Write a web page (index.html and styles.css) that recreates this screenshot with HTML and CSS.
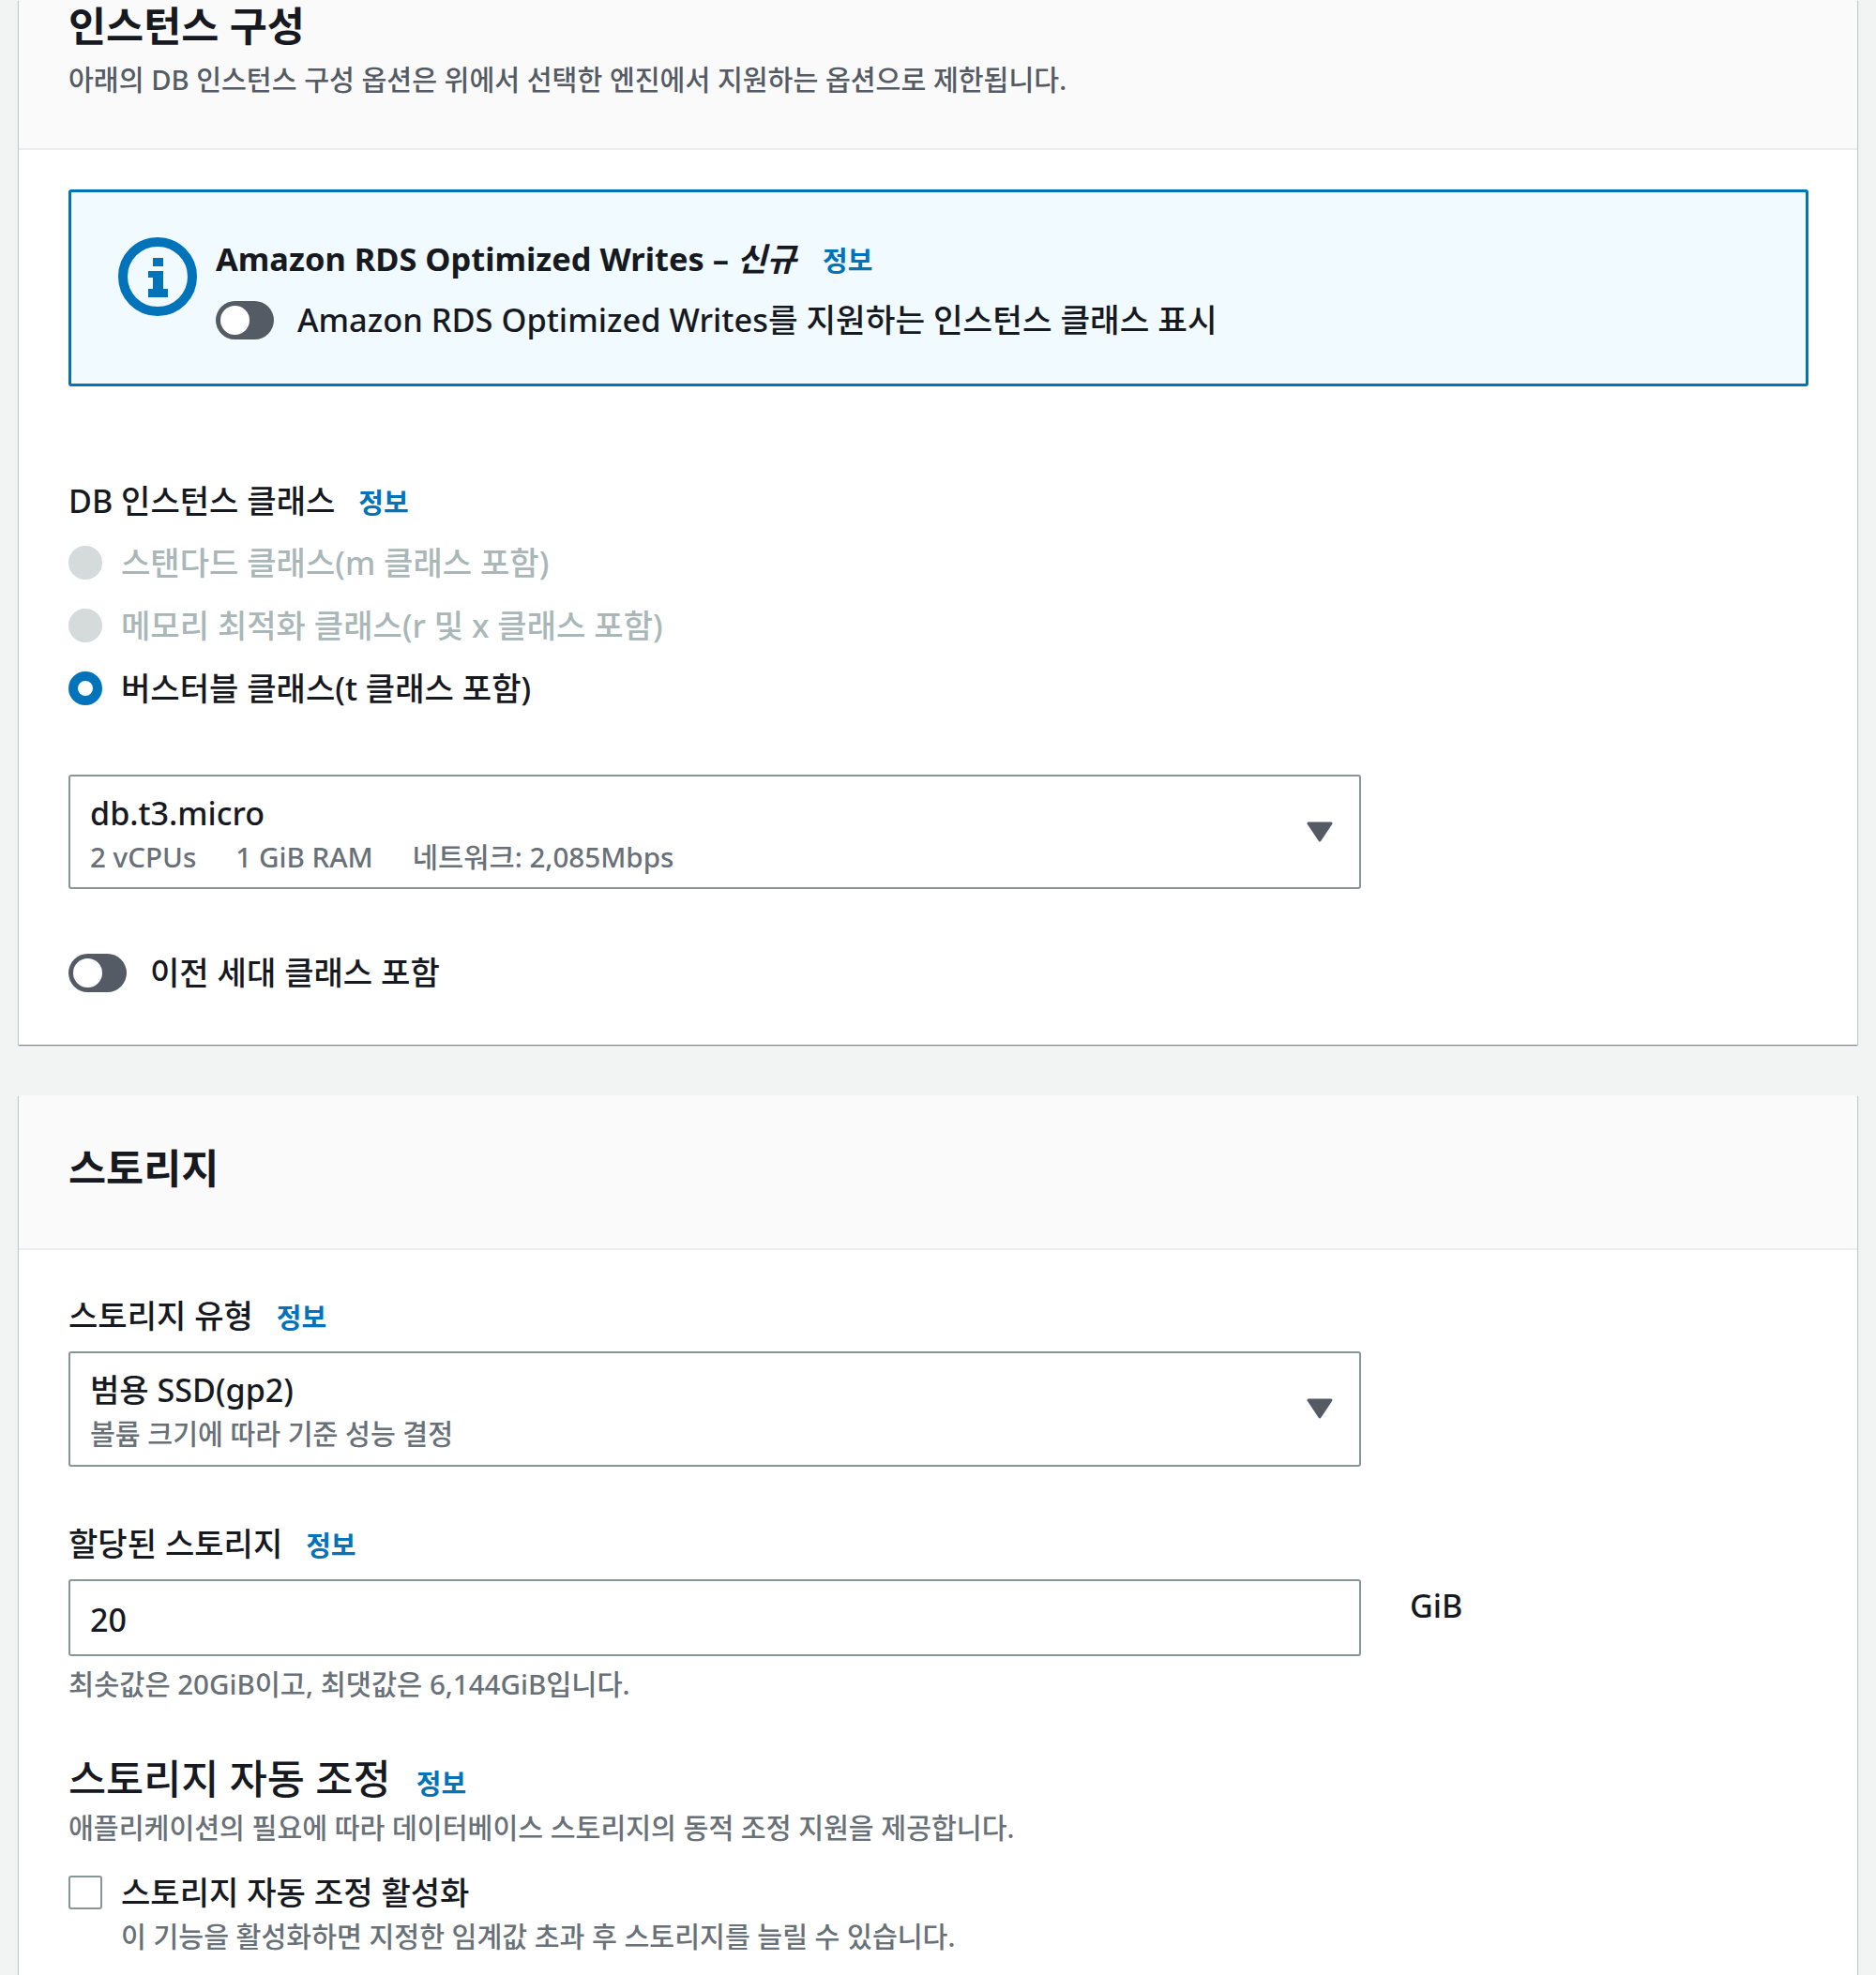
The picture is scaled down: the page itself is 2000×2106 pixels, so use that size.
FILE: index.html

```html
<!DOCTYPE html>
<html lang="ko">
<head>
<meta charset="UTF-8">
<title>인스턴스 구성</title>
<link rel="stylesheet" href="styles.css">
</head>
<body>

<section class="card card-first">
  <div class="card-header header-first">
    <h2>인스턴스 구성</h2>
    <p class="header-desc">아래의 DB 인스턴스 구성 옵션은 위에서 선택한 엔진에서 지원하는 옵션으로 제한됩니다.</p>
  </div>
  <div class="card-body body-first">
    <div class="alert">
      <svg class="alert-icon" viewBox="0 0 84 84">
        <circle cx="42" cy="42" r="37" fill="none" stroke="#0073bb" stroke-width="10"/>
        <rect x="37" y="22" width="11" height="9" fill="#0073bb"/>
        <path d="M32 36h16v19h5v9H32v-9h5V43h-5z" fill="#0073bb"/>
      </svg>
      <div>
        <div class="alert-title">
          <strong>Amazon RDS Optimized Writes – <em>신규</em></strong>
          <a class="info">정보</a>
        </div>
        <div class="toggle-row alert-toggle">
          <span class="toggle"></span>
          <span>Amazon RDS Optimized Writes를 지원하는 인스턴스 클래스 표시</span>
        </div>
      </div>
    </div>

    <div class="label class-label">DB 인스턴스 클래스 <a class="info">정보</a></div>
    <div class="radio-row disabled"><span class="radio"></span>스탠다드 클래스(m 클래스 포함)</div>
    <div class="radio-row disabled"><span class="radio"></span>메모리 최적화 클래스(r 및 x 클래스 포함)</div>
    <div class="radio-row"><span class="radio checked"></span>버스터블 클래스(t 클래스 포함)</div>

    <div class="select class-select">
      <div class="select-value">db.t3.micro</div>
      <div class="select-sub"><span>2 vCPUs</span><span>1 GiB RAM</span><span>네트워크: 2,085Mbps</span></div>
      <svg class="caret" viewBox="0 0 28 22"><path d="M2 2h24L14 20z" fill="#545b64" stroke="#545b64" stroke-width="3" stroke-linejoin="round"/></svg>
    </div>

    <div class="toggle-row old-gen">
      <span class="toggle"></span>
      <span>이전 세대 클래스 포함</span>
    </div>
  </div>
</section>

<section class="card">
  <div class="card-header header-storage">
    <h2>스토리지</h2>
  </div>
  <div class="card-body body-storage">
    <div class="label">스토리지 유형 <a class="info">정보</a></div>
    <div class="select storage-select">
      <div class="select-value">범용 SSD(gp2)</div>
      <div class="select-sub"><span>볼륨 크기에 따라 기준 성능 결정</span></div>
      <svg class="caret" viewBox="0 0 28 22"><path d="M2 2h24L14 20z" fill="#545b64" stroke="#545b64" stroke-width="3" stroke-linejoin="round"/></svg>
    </div>

    <div class="label alloc-label">할당된 스토리지 <a class="info">정보</a></div>
    <div class="input-row">
      <div class="input">20</div>
      <span class="unit">GiB</span>
    </div>
    <p class="hint">최솟값은 20GiB이고, 최댓값은 6,144GiB입니다.</p>

    <h3>스토리지 자동 조정 <a class="info">정보</a></h3>
    <p class="hint autoscale-desc">애플리케이션의 필요에 따라 데이터베이스 스토리지의 동적 조정 지원을 제공합니다.</p>
    <div class="check-row">
      <span class="checkbox"></span>
      <div>
        <div>스토리지 자동 조정 활성화</div>
        <p class="hint check-hint">이 기능을 활성화하면 지정한 임계값 초과 후 스토리지를 늘릴 수 있습니다.</p>
      </div>
    </div>
  </div>
</section>

</body>
</html>
```

FILE: styles.css

```css
* { box-sizing: border-box; }
html, body { margin: 0; height: 2106px; overflow: hidden; }
body {
  background: #f2f3f3;
  color: #16191f;
  font-family: "Noto Sans", "Noto Sans CJK KR", sans-serif;
  font-size: 34.1px;
  font-weight: 500;
  line-height: 48px;
  padding: 0 20px;
}
p { margin: 0; }

.card {
  width: 1960px;
  background: #fff;
  box-shadow: 0 1px 1px 0 rgba(0,28,36,0.3), 1px 1px 1px 0 rgba(0,28,36,0.15), -1px 1px 1px 0 rgba(0,28,36,0.15);
}
.card-first { height: 1114px; margin-bottom: 54px; }
.card-header {
  background: #fafafa;
  border-bottom: 2px solid #eaeded;
  padding: 0 53px;
}
.card-header h2 { margin: 0; font-size: 43.6px; line-height: 54px; font-weight: 700; }
.header-first { height: 160px; }
.header-storage { height: 165px; padding-top: 50px; }
.header-desc { font-size: 29.2px; line-height: 40px; color: #545b64; margin-top: 11px; }
.card-body { padding: 0 52px 0 53px; }
.body-first { padding-top: 42px; }
.body-storage { padding-top: 46px; padding-bottom: 60px; }

.alert {
  display: flex;
  gap: 20px;
  height: 210px;
  background: #f1faff;
  border: 3px solid #0073bb;
  border-radius: 3px;
  padding: 47px 50px 0;
  font-size: 34.4px;
}
.alert-icon { width: 84px; height: 84px; flex: none; margin-top: 1px; }
.alert-title { line-height: 48px; }
.alert-title strong { font-weight: 700; }
.alert-title em { font-style: italic; }
.info { color: #0073bb; font-size: 29px; font-weight: 700; margin-left: 16px; }
.alert-title .info { margin-left: 19px; }

.toggle-row { display: flex; align-items: center; gap: 25px; height: 48px; margin-top: 16px; }
.alert-toggle { margin-top: 15px; }
.toggle {
  width: 62px;
  height: 41px;
  flex: none;
  background: #545b64;
  border-radius: 21px;
  padding: 5px;
}
.toggle::before {
  content: "";
  display: block;
  width: 31px;
  height: 31px;
  background: #fff;
  border-radius: 50%;
}
.old-gen { margin-top: 65px; }

.label { height: 48px; }
.class-label { margin-top: 98px; }
.alloc-label { margin-top: 58px; }

.radio-row { display: flex; align-items: center; gap: 20px; height: 48px; margin-top: 19px; }
.class-label + .radio-row { margin-top: 18px; }
.radio { width: 36px; height: 36px; flex: none; border-radius: 50%; background: #fff; }
.disabled { color: #aab7b8; }
.disabled .radio { background: #d5dbdb; }
.radio.checked { border: 10px solid #0073bb; }

.select {
  position: relative;
  width: 1378px;
  height: 122px;
  border: 2px solid #879596;
  border-radius: 3px;
  padding: 15px 21px 0;
  margin-top: 14px;
}
.class-select { margin-top: 68px; }
.storage-select { height: 123px; }
.select-value { line-height: 48px; }
.select-sub { display: flex; gap: 42px; font-size: 29.6px; line-height: 40px; color: #687078; margin-top: 3px; }
.storage-select .select-sub { font-size: 29.2px; }
.caret { position: absolute; right: 28px; top: 48px; width: 28px; height: 22px; }

.input-row { display: flex; gap: 52px; margin-top: 14px; }
.input {
  width: 1378px;
  height: 82px;
  border: 2px solid #879596;
  border-radius: 3px;
  padding: 17px 21px 0;
}
.unit { line-height: 56px; }

.hint { font-size: 29.2px; line-height: 40px; color: #687078; }
.input-row + .hint { margin-top: 10px; font-size: 29.5px; }
h3 { margin: 53px 0 0; font-size: 43.6px; line-height: 54px; font-weight: 500; }
h3 .info { margin-left: 16px; }
.autoscale-desc { margin-top: 0; }

.check-row { display: flex; gap: 20px; margin-top: 25px; }
.check-hint { margin-top: 3px; }
.checkbox {
  width: 36px;
  height: 36px;
  flex: none;
  margin-top: 6px;
  border: 2px solid #879596;
  border-radius: 3px;
  background: #fff;
}
```
